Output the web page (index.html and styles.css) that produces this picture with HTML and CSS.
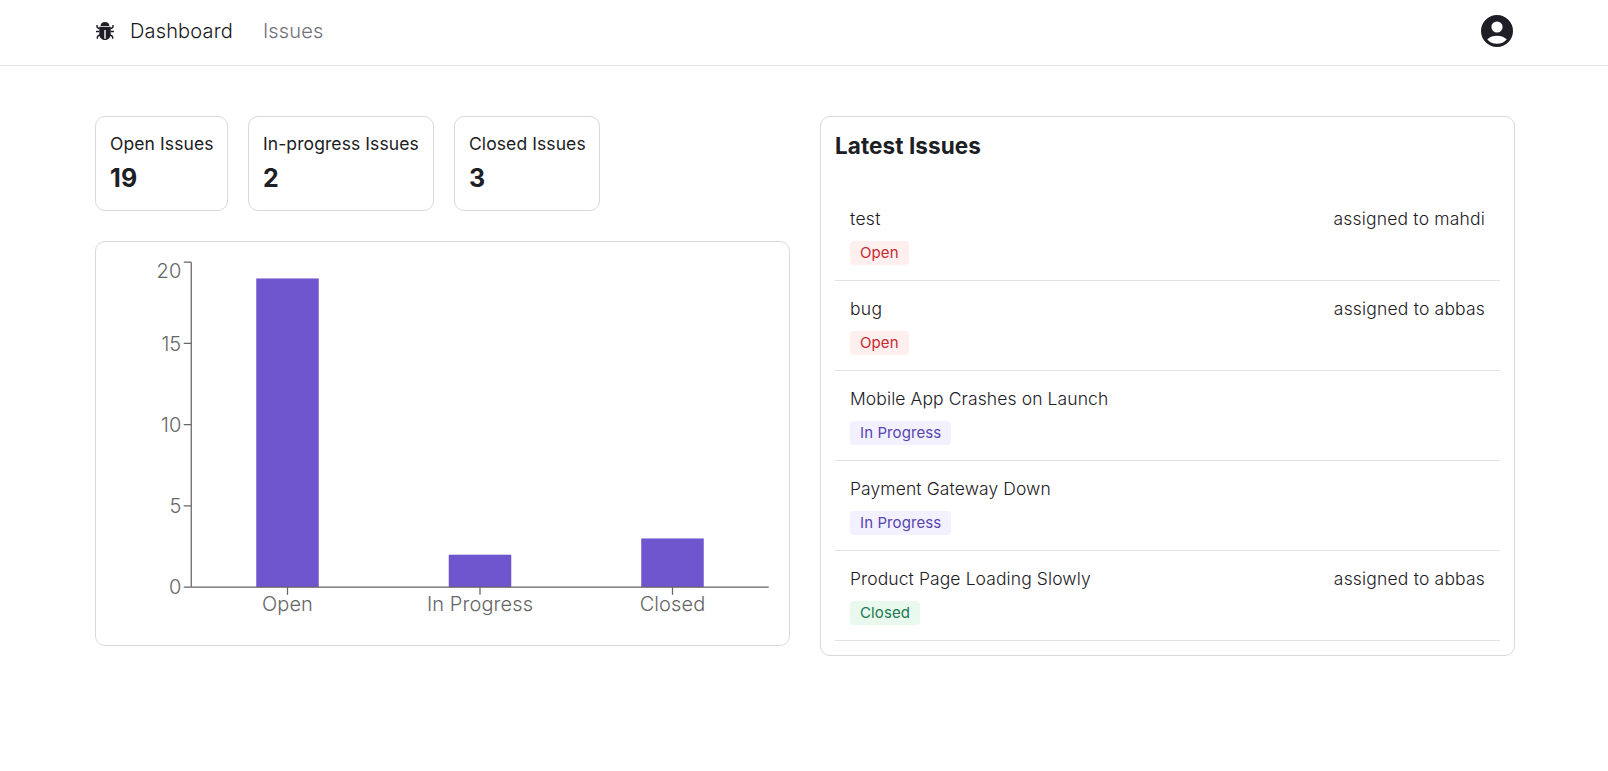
FILE: index.html
```html
<!DOCTYPE html>
<html lang="en">
<head>
<meta charset="utf-8">
<title>Issue Tracker</title>
<link rel="stylesheet" href="styles.css">
</head>
<body>
<nav class="navbar">
  <div class="container navbar-inner">
    <div class="nav-left">
      <svg class="bug" viewBox="0 0 20 20" fill="currentColor">
        <path d="M5.600 4.900C5.600 2.600 7.400 1 10 1s4.400 1.600 4.400 3.900z"/>
        <path fill-rule="evenodd" d="M4.300 5.800h11.400V13c0 3.500-2.300 6-5.700 6s-5.700-2.500-5.700-6zM9.300 9v8.700h1.400V9z"/>
        <path fill="none" stroke="currentColor" stroke-width="1.400" d="M2 4v1.200c0 1.300.9 2.100 2.600 2.300M18 4v1.200c0 1.300-.9 2.100-2.600 2.300M1 10.500h3.500M19 10.500h-3.500M2.300 17.800v-1c0-1.500.9-2.400 2.700-2.800M17.700 17.800v-1c0-1.500-.9-2.400-2.700-2.800"/>
      </svg>
      <div class="nav-links"><a class="nav-link active">Dashboard</a><a class="nav-link">Issues</a></div>
    </div>
    <svg class="avatar" viewBox="2 2 20 20" fill="currentColor"><path fill-rule="evenodd" d="M12 2a10 10 0 1 0 0 20 10 10 0 0 0 0-20zm0 4a3.500 3.500 0 1 1 0 7 3.500 3.500 0 0 1 0-7zm0 14c-2.500 0-4.700-1.100-6.100-2.900C7.600 15.700 9.700 15 12 15s4.400.7 6.100 2.100C16.700 18.900 14.500 20 12 20z"/></svg>
  </div>
</nav>
<main class="container dashboard">
  <section class="column">
    <div class="stats">
      <div class="card stat stat-open"><span class="stat-label">Open Issues</span><span class="stat-value">19</span></div>
      <div class="card stat stat-progress"><span class="stat-label">In-progress Issues</span><span class="stat-value">2</span></div>
      <div class="card stat stat-closed"><span class="stat-label">Closed Issues</span><span class="stat-value">3</span></div>
    </div>
    <div class="card chart-card">
      <svg class="chart" viewBox="96 242 693 403">
        <g class="bars">
          <rect x="256.25" y="278.45" width="62.5" height="308.75"/>
          <rect x="448.75" y="554.7" width="62.5" height="32.5"/>
          <rect x="641.25" y="538.45" width="62.5" height="48.75"/>
        </g>
        <path class="axis" d="M191.250 262.200V587.200M183.750 262.200h7.500M183.750 343.450h7.500M183.750 424.700h7.500M183.750 505.950h7.500M183.750 587.200H768.750M287.500 587.200v7.500M480 587.200v7.500M672.500 587.200v7.500"/>
        <g class="tick tick-y">
          <text x="181.250" y="278">20</text><text x="181.250" y="351">15</text><text x="181.250" y="432">10</text><text x="181.250" y="513">5</text><text x="181.250" y="594">0</text>
        </g>
        <g class="tick tick-x">
          <text x="287.500" y="611">Open</text><text x="480" y="611">In Progress</text><text x="672.500" y="611">Closed</text>
        </g>
      </svg>
    </div>
  </section>
  <section class="card latest">
    <h2 class="latest-title">Latest Issues</h2>
    <div class="issue"><div class="issue-main"><span class="title-short">test</span><span class="badge red">Open</span></div><span class="assignee">assigned to mahdi</span></div>
    <div class="issue"><div class="issue-main"><span class="title-short">bug</span><span class="badge red">Open</span></div><span class="assignee">assigned to abbas</span></div>
    <div class="issue"><div class="issue-main"><span>Mobile App Crashes on Launch</span><span class="badge violet">In Progress</span></div></div>
    <div class="issue"><div class="issue-main"><span>Payment Gateway Down</span><span class="badge violet">In Progress</span></div></div>
    <div class="issue"><div class="issue-main"><span>Product Page Loading Slowly</span><span class="badge green">Closed</span></div><span class="assignee">assigned to abbas</span></div>
  </section>
</main>
</body>
</html>
```
FILE: styles.css
```css
* { box-sizing: border-box; }
body { margin: 0; background: #fff; color: #1c2024; font-family: Inter, sans-serif; font-size: 17.5px; line-height: 25px; font-weight: 300; }
.container { width: 1420px; margin: 0 auto; }
.navbar { height: 66px; border-bottom: 1px solid #e5e7eb; }
.navbar-inner { height: 62px; display: flex; align-items: center; justify-content: space-between; transform: translateX(1px); }
.nav-left { display: flex; align-items: center; gap: 15px; }
.bug { width: 20px; height: 20px; color: #1f1d26; display: block; }
.nav-links { display: flex; gap: 30px; font-size: 20px; line-height: 30px; letter-spacing: 0.16px; }
.nav-link { color: #71717a; }
.nav-link.active { color: #18181b; }
.avatar { width: 32px; height: 32px; margin-right: 2px; color: #1f1d26; display: block; }
.dashboard { display: grid; grid-template-columns: 1fr 1fr; gap: 30px; padding-top: 50px; align-items: start; transform: translateX(1px); }
.column { display: flex; flex-direction: column; gap: 30px; }
.stats { display: flex; gap: 20px; }
.card { border: 1px solid #d9d9e0; border-radius: 10px; }
.stat { height: 95px; padding: 14px; display: flex; flex-direction: column; gap: 5px; white-space: nowrap; }
.stat-open { width: 133px; }
.stat-progress { width: 186px; }
.stat-closed { width: 146px; }
.stat-label { font-weight: 400; letter-spacing: 0.09px; }
.stat-value { font-size: 25px; line-height: 34px; font-weight: 700; letter-spacing: 0.3px; }
.chart-card { height: 405px; }
.chart { display: block; width: 693px; height: 403px; }
.bars { fill: #6e56cf; }
.axis { fill: none; stroke: #666; stroke-width: 1.25; }
.tick { fill: #666; font-size: 20px; }
.tick-y { text-anchor: end; }
.tick-x { text-anchor: middle; letter-spacing: 0.1px; }
.latest { height: 540px; padding: 14px; }
.latest-title { margin: 0 0 30px; font-size: 22.5px; line-height: 30px; font-weight: 700; letter-spacing: 0.08px; }
.issue { height: 90px; padding: 15px; border-bottom: 1px solid #e1e2e6; display: flex; justify-content: space-between; letter-spacing: 0.1px; }
.issue-main { display: flex; flex-direction: column; align-items: flex-start; gap: 10px; }
.title-short { letter-spacing: 0.3px; }
.assignee { letter-spacing: 0.18px; }
.badge { height: 25px; padding: 0 10px; border-radius: 4px; font-size: 15px; line-height: 24px; font-weight: 400; }
.red { background: #ffefef; color: #c62a2f; }
.violet { background: #f3f0ff; color: #5746af; }
.green { background: #e9f9ee; color: #18794e; }
```
